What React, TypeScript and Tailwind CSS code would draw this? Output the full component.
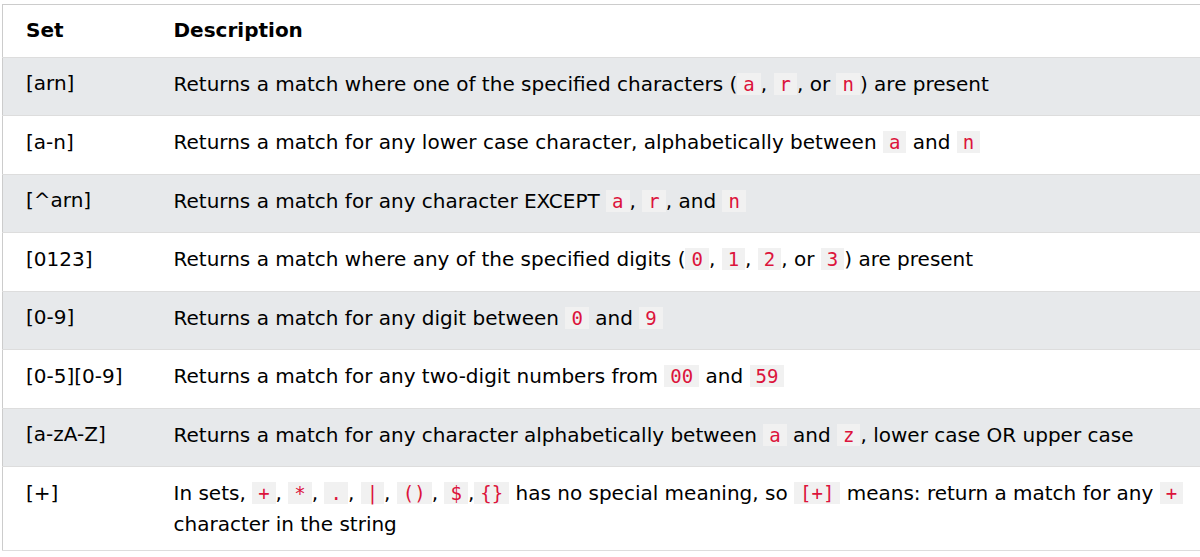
import React from 'react';

type Part = string | { code: string };

interface Row {
  set: string;
  desc: Part[];
}

const rows: Row[] = [
  { set: '[arn]', desc: ['Returns a match where one of the specified characters (', { code: 'a' }, ', ', { code: 'r' }, ', or ', { code: 'n' }, ') are present'] },
  { set: '[a-n]', desc: ['Returns a match for any lower case character, alphabetically between ', { code: 'a' }, ' and ', { code: 'n' }] },
  { set: '[^arn]', desc: ['Returns a match for any character EXCEPT ', { code: 'a' }, ', ', { code: 'r' }, ', and ', { code: 'n' }] },
  { set: '[0123]', desc: ['Returns a match where any of the specified digits (', { code: '0' }, ', ', { code: '1' }, ', ', { code: '2' }, ', or ', { code: '3' }, ') are present'] },
  { set: '[0-9]', desc: ['Returns a match for any digit between ', { code: '0' }, ' and ', { code: '9' }] },
  { set: '[0-5][0-9]', desc: ['Returns a match for any two-digit numbers from ', { code: '00' }, ' and ', { code: '59' }] },
  { set: '[a-zA-Z]', desc: ['Returns a match for any character alphabetically between ', { code: 'a' }, ' and ', { code: 'z' }, ', lower case OR upper case'] },
  {
    set: '[+]',
    desc: [
      'In sets, ', { code: '+' }, ', ', { code: '*' }, ', ', { code: '.' }, ', ', { code: '|' }, ', ', { code: '()' }, ', ', { code: '$' }, ',', { code: '{}' },
      ' has no special meaning, so ', { code: '[+]' }, ' means: return a match for any ', { code: '+' }, ' character in the string',
    ],
  },
];

const Code: React.FC<{ children: string }> = ({ children }) => (
  <code className="bg-[#f1f1f1] px-[6px] text-[#dc143c] text-[19px] leading-[35.6px] font-['DejaVu_Sans_Mono',monospace]">{children}</code>
);

export default function App() {
  return (
    <div className="w-[1200px] h-[557px] overflow-hidden bg-white pt-[4px] pl-[2px]">
      <table className="w-[1215px] border-collapse border border-[#cccccc] font-['DejaVu_Sans',Verdana,sans-serif] text-[20px] leading-[25.5px] text-black">
        <thead>
          <tr className="border-b border-[#dddddd] bg-white">
            <th className="w-[171px] pl-[23px] pr-2 pt-[12.5px] pb-[14px] text-left font-bold">Set</th>
            <th className="pr-4 pt-[12.5px] pb-[14px] text-left font-bold">Description</th>
          </tr>
        </thead>
        <tbody>
          {rows.map((r, i) => (
            <tr key={r.set} className={`border-b border-[#dddddd] ${i % 2 === 0 ? 'bg-[#e7e9eb]' : 'bg-white'}`}>
              <td className="pl-[23px] pr-2 pt-[13.3px] pb-[13.2px] align-top">{r.set}</td>
              <td className="pr-4 pt-[8.7px] pb-[13.2px] align-top">
                {r.desc.map((p, j) => (typeof p === 'string' ? <React.Fragment key={j}>{p}</React.Fragment> : <Code key={j}>{p.code}</Code>))}
              </td>
            </tr>
          ))}
        </tbody>
      </table>
    </div>
  );
}
